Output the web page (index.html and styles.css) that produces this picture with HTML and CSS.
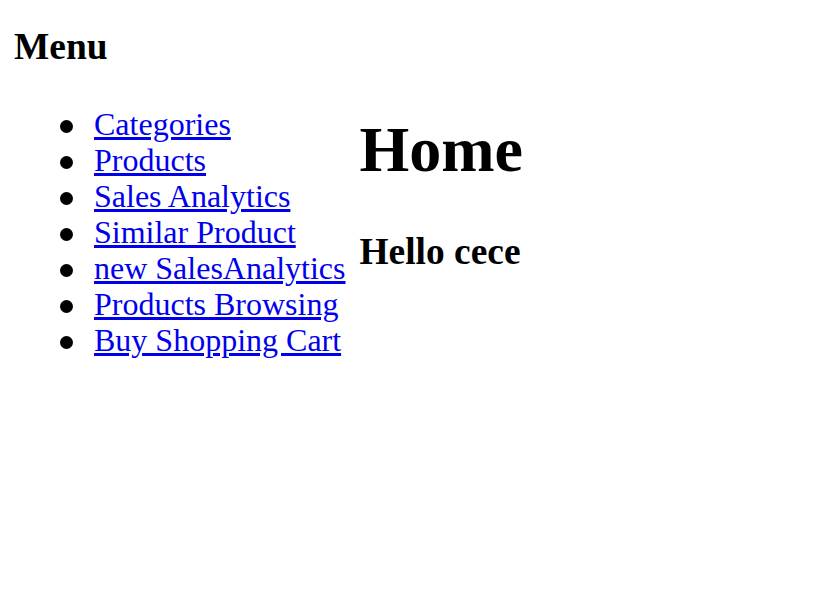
FILE: index.html
```html
<!DOCTYPE html>
<html>
<head>
<meta charset="utf-8">
<title>Home</title>
<link rel="stylesheet" href="styles.css">
</head>
<body>
<div class="layout">
  <nav class="menu">
    <h3 class="menu-title">Menu</h3>
    <ul class="menu-list">
      <li><a href="#">Categories</a></li>
      <li><a href="#">Products</a></li>
      <li><a href="#">Sales Analytics</a></li>
      <li><a href="#">Similar Product</a></li>
      <li><a href="#">new SalesAnalytics</a></li>
      <li><a href="#">Products Browsing</a></li>
      <li><a href="#">Buy Shopping Cart</a></li>
    </ul>
  </nav>
  <main class="content">
    <h1 class="page-title">Home</h1>
    <h3 class="greeting">Hello cece</h3>
  </main>
</div>
</body>
</html>
```
FILE: styles.css
```css
html, body {
  margin: 0;
  padding: 0;
  background: #ffffff;
}
body {
  font-family: "Liberation Serif", "Times New Roman", serif;
  font-size: 32px;
  color: #000000;
}
.layout {
  display: flex;
  align-items: center;
  gap: 14px;
  padding: 0 14px;
}
.menu-title {
  font-size: 37.44px;
  font-weight: bold;
  margin: 25px 0 38px;
}
.menu-list {
  margin: 0 0 18px;
  padding-left: 80px;
  list-style: none;
}
.menu-list li {
  position: relative;
  line-height: 36px;
}
.menu-list li::before {
  content: "";
  position: absolute;
  left: -34px;
  top: 14px;
  width: 13px;
  height: 13px;
  border-radius: 50%;
  background: #000000;
}
.menu-list a {
  color: #0000ee;
  text-decoration: underline;
}
.page-title {
  font-size: 64px;
  font-weight: bold;
  margin: 45px 0 43px;
}
.greeting {
  font-size: 37.44px;
  font-weight: bold;
  margin: 0 0 35px;
}
```
